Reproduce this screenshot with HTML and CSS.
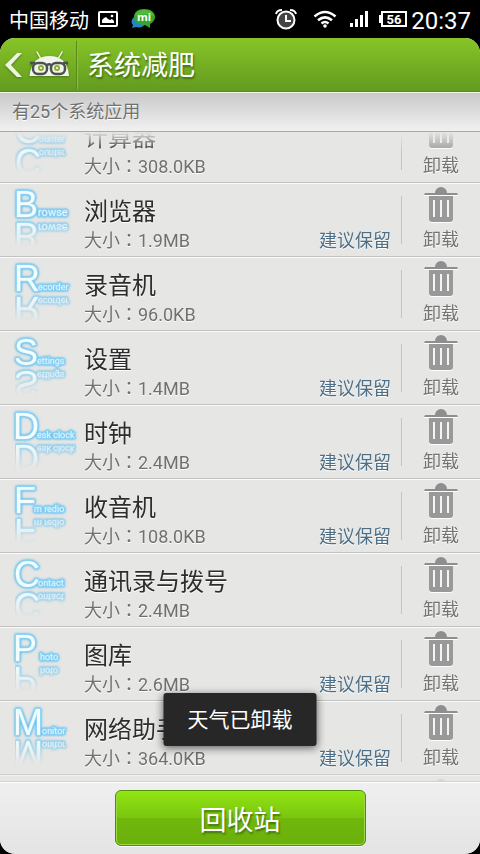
FILE: index.html
```html
<!DOCTYPE html>
<html lang="zh-CN">
<head>
<meta charset="utf-8">
<meta name="viewport" content="width=device-width, initial-scale=1">
<title>系统减肥</title>
<link rel="stylesheet" href="styles.css">
</head>
<body>
<svg class="defs" aria-hidden="true">
  <defs>
    <symbol id="trash" viewBox="0 0 36 37">
      <path fill="#fff" d="M1 8h34v1H1zM6 32h24v1a3 3 0 0 1-3 3H9a3 3 0 0 1-3-3z"/>
      <path fill="#8e8e8e" d="M12 6a6 6 0 0 1 12 0h10l1 2H1l1-2z"/>
      <path fill="#999" d="M6 9h24v23a3 3 0 0 1-3 3H9a3 3 0 0 1-3-3z"/>
      <path stroke="#f4f4f4" stroke-width="2" d="M11 13v17M18 13v17M25 13v17"/>
    </symbol>
  </defs>
</svg>

<div class="status">
  <span class="carrier">中国移动</span>
  <svg class="picture-icon" width="20" height="16" viewBox="0 0 20 16"><rect x="1" y="1" width="18" height="14" rx="1" fill="none" stroke="#fff" stroke-width="2"/><path fill="#fff" d="M4 12V9l2-2 2-1 2 2 2 1 2-1 2 2v2z"/><circle cx="14" cy="5" r="1.300" fill="#fff"/></svg>
  <svg class="chat-icon" width="26" height="22" viewBox="0 0 26 22"><path fill="#2583cf" d="M8 8C2 8 0 14 3 17l-1 3 4-1c4 1 8 0 9-3z"/><path fill="#35a82b" d="M14 1c7 0 11 3.500 11 8 0 3-2 5.500-5 7l0 4-5-3C8 17 4 14 4 9s4-8 10-8z"/><path fill="#6bca4a" opacity=".5" d="M14 2c6 0 9 2 10 6-5-2-14-2-19 0 1-4 4-6 9-6z"/><text x="14" y="13" class="mi">mi</text></svg>
  <span class="spacer"></span>
  <svg class="alarm-icon" width="22" height="21" viewBox="0 0 22 21"><circle cx="11" cy="11" r="8.500" fill="#444" stroke="#fff" stroke-width="2"/><path fill="none" stroke="#fff" stroke-width="2" d="M1 5q1-4 6-4M21 5q-1-4-6-4M11 6v6h5"/></svg>
  <svg class="wifi-icon" width="24" height="18" viewBox="0 0 24 18"><g fill="none" stroke="#fff" stroke-width="2.600"><path d="M1.500 6.500q10.500-9 21 0M5 10.300q7-6 14 0M8.500 13.500q3.500-3 7 0"/></g><circle cx="12" cy="16" r="1.800" fill="#fff"/></svg>
  <svg class="signal-icon" width="18" height="16" viewBox="0 0 18 16"><path fill="#fff" d="M0 12h3v4H0zM5 8h3v8H5zM10 4h3v12h-3zM15 0h3v16h-3z"/></svg>
  <svg class="battery-icon" width="28" height="16" viewBox="0 0 28 16"><rect x="3" y="1" width="24" height="14" fill="none" stroke="#fff" stroke-width="2"/><path fill="#fff" d="M0 4h3v8H0z"/><text x="15" y="13" class="level">56</text></svg>
  <time class="clock">20:37</time>
</div>

<div class="app">
  <header class="header">
    <button class="back" type="button" aria-label="返回">
      <svg width="70" height="30" viewBox="0 0 70 30">
        <path fill="#edf5e0" d="M17 3h5L11 15l11 12h-5L5 15z"/>
        <path stroke="#f1f6e8" stroke-width="1.500" stroke-linecap="round" d="M37 2l4 7M62 2l-4 7"/>
        <path fill="#f1f4ea" d="M29.500 26C31 12 38 6 49.500 6S68 12 69 26z"/>
        <g class="glasses"><rect x="33" y="13" width="14" height="11" rx="5"/><rect x="51" y="13" width="14" height="11" rx="5"/><path d="M30 13h5M47 15q2-1.500 4 0M63 13h5"/></g>
        <circle cx="41" cy="18" r="3" fill="#8aae32"/><circle cx="57" cy="18" r="3" fill="#8aae32"/><circle cx="41" cy="18" r="1" fill="#fff"/><circle cx="57" cy="18" r="1" fill="#fff"/>
      </svg>
    </button>
    <h1 class="title">系统减肥</h1>
  </header>
  <p class="summary">有25个系统应用</p>

  <main class="viewport">
    <ul class="apps">
      <li class="row">
        <svg class="logo" width="62" height="30" viewBox="0 0 62 30"><text x="0" y="27" class="initial">C</text><text x="24" y="26" class="rest">ounter</text></svg>
        <div class="info"><h2 class="name">计算器</h2><p class="meta"><span>大小<span lang="zh-TW" class="colon">：</span>308.0KB</span></p></div>
        <button class="remove" type="button"><svg width="36" height="37"><use href="#trash"/></svg>卸载</button>
      </li>
      <li class="row">
        <svg class="logo" width="62" height="30" viewBox="0 0 62 30"><text x="-1" y="27" class="initial">B</text><text x="23" y="26" class="rest wide">rowse</text></svg>
        <div class="info"><h2 class="name">浏览器</h2><p class="meta"><span>大小<span lang="zh-TW" class="colon">：</span>1.9MB</span><span class="keep">建议保留</span></p></div>
        <button class="remove" type="button"><svg width="36" height="37"><use href="#trash"/></svg>卸载</button>
      </li>
      <li class="row">
        <svg class="logo" width="62" height="30" viewBox="0 0 62 30"><text x="-1" y="27" class="initial">R</text><text x="23" y="26" class="rest">ecorder</text></svg>
        <div class="info"><h2 class="name">录音机</h2><p class="meta"><span>大小<span lang="zh-TW" class="colon">：</span>96.0KB</span></p></div>
        <button class="remove" type="button"><svg width="36" height="37"><use href="#trash"/></svg>卸载</button>
      </li>
      <li class="row">
        <svg class="logo" width="62" height="30" viewBox="0 0 62 30"><text x="-1" y="27" class="initial">S</text><text x="22" y="26" class="rest">ettings</text></svg>
        <div class="info"><h2 class="name">设置</h2><p class="meta"><span>大小<span lang="zh-TW" class="colon">：</span>1.4MB</span><span class="keep">建议保留</span></p></div>
        <button class="remove" type="button"><svg width="36" height="37"><use href="#trash"/></svg>卸载</button>
      </li>
      <li class="row">
        <svg class="logo" width="62" height="30" viewBox="0 0 62 30"><text x="-2" y="27" class="initial">D</text><text x="22" y="26" class="rest">esk clock</text></svg>
        <div class="info"><h2 class="name">时钟</h2><p class="meta"><span>大小<span lang="zh-TW" class="colon">：</span>2.4MB</span><span class="keep">建议保留</span></p></div>
        <button class="remove" type="button"><svg width="36" height="37"><use href="#trash"/></svg>卸载</button>
      </li>
      <li class="row">
        <svg class="logo" width="62" height="30" viewBox="0 0 62 30"><text x="-1" y="27" class="initial">F</text><text x="19" y="26" class="rest">m redio</text></svg>
        <div class="info"><h2 class="name">收音机</h2><p class="meta"><span>大小<span lang="zh-TW" class="colon">：</span>108.0KB</span><span class="keep">建议保留</span></p></div>
        <button class="remove" type="button"><svg width="36" height="37"><use href="#trash"/></svg>卸载</button>
      </li>
      <li class="row">
        <svg class="logo" width="62" height="30" viewBox="0 0 62 30"><text x="-1" y="27" class="initial">C</text><text x="23" y="26" class="rest">ontact</text></svg>
        <div class="info"><h2 class="name">通讯录与拨号</h2><p class="meta"><span>大小<span lang="zh-TW" class="colon">：</span>2.4MB</span></p></div>
        <button class="remove" type="button"><svg width="36" height="37"><use href="#trash"/></svg>卸载</button>
      </li>
      <li class="row">
        <svg class="logo" width="62" height="30" viewBox="0 0 62 30"><text x="-2" y="27" class="initial">P</text><text x="25" y="26" class="rest">hoto</text></svg>
        <div class="info"><h2 class="name">图库</h2><p class="meta"><span>大小<span lang="zh-TW" class="colon">：</span>2.6MB</span><span class="keep">建议保留</span></p></div>
        <button class="remove" type="button"><svg width="36" height="37"><use href="#trash"/></svg>卸载</button>
      </li>
      <li class="row">
        <svg class="logo" width="62" height="30" viewBox="0 0 62 30"><text x="-2" y="27" class="initial">M</text><text x="27" y="26" class="rest">onitor</text></svg>
        <div class="info"><h2 class="name">网络助手</h2><p class="meta"><span>大小<span lang="zh-TW" class="colon">：</span>364.0KB</span><span class="keep">建议保留</span></p></div>
        <button class="remove" type="button"><svg width="36" height="37"><use href="#trash"/></svg>卸载</button>
      </li>
      <li class="row">
        <span class="logo"></span>
        <div class="info"></div>
        <button class="remove" type="button"><svg width="36" height="37"><use href="#trash"/></svg></button>
      </li>
    </ul>
  </main>

  <footer class="footer">
    <button class="recycle" type="button">回收站</button>
  </footer>
  <div class="toast" role="status">天气已卸载</div>
</div>
</body>
</html>
```
FILE: styles.css
```css
* {
  box-sizing: border-box;
}

body {
  margin: 0;
  height: 100vh;
  display: flex;
  flex-direction: column;
  background: #000;
  font-family: Roboto, "Noto Sans CJK SC", sans-serif;
  font-size: 18px;
  overflow: hidden;
}

h1, h2, p, ul {
  margin: 0;
  padding: 0;
  font-weight: 400;
}

button {
  border: 0;
  padding: 0;
  background: none;
  font: inherit;
  color: inherit;
}

.defs {
  position: absolute;
  width: 0;
  height: 0;
}

/* Status bar */
.status {
  flex: none;
  height: 38px;
  display: flex;
  align-items: center;
  padding: 0 9px;
  color: #fff;
}

.carrier {
  font-size: 20px;
}

.picture-icon {
  margin-left: 9px;
}

.chat-icon {
  margin-left: 12px;
}

.mi {
  fill: #fff;
  font: 700 11px "Open Sans", sans-serif;
  text-anchor: middle;
}

.spacer {
  flex: 1;
}

.wifi-icon {
  margin-left: 16px;
}

.signal-icon {
  margin-left: 13px;
}

.battery-icon {
  margin: 0 4px 0 11px;
}

.level {
  fill: #fff;
  font: 700 13px Roboto, sans-serif;
  text-anchor: middle;
}

.clock {
  font-size: 24px;
  line-height: 38px;
  padding-top: 4px;
}

/* App frame */
.app {
  position: relative;
  flex: 1;
  min-height: 0;
  display: flex;
  flex-direction: column;
  overflow: hidden;
  border-radius: 15px;
  background: #e6e6e4;
}

.header {
  flex: none;
  height: 54px;
  display: flex;
  align-items: center;
  background: linear-gradient(#87c527, #639a20);
  border-bottom: 1px solid #5a8d1c;
  color: #fff;
}

.back {
  height: 48px;
  width: 77px;
  display: flex;
  align-items: center;
  border-right: 1px solid #578a1b;
  box-shadow: 1px 0 #8cbc4a;
}

.back svg {
  filter: drop-shadow(0 1px 1px #4a7a14);
}

.glasses {
  fill: none;
  stroke: #4b5150;
  stroke-width: 2.5;
}

.title {
  margin-left: 10px;
  padding-top: 2px;
  font-size: 27px;
  line-height: 48px;
  text-shadow: 1px 2px 2px #41700f;
}

.summary {
  flex: none;
  height: 40px;
  padding-left: 12px;
  line-height: 38px;
  color: #707070;
  text-shadow: 0 1px #fff;
  background: linear-gradient(#c9c9c9, #f1f1f1);
  border-top: 1px solid #f0f5e8;
  border-bottom: 1px solid #aaa;
}

/* App list, scrolled part of a row down */
.viewport {
  flex: 1;
  min-height: 0;
  overflow: hidden;
  -webkit-mask-image: linear-gradient(transparent, #000 20px, #000 calc(100% - 12px), transparent);
  mask-image: linear-gradient(transparent, #000 20px, #000 calc(100% - 12px), transparent);
}

.apps {
  margin-top: -23px;
  list-style: none;
}

.row {
  height: 74px;
  display: grid;
  grid-template-columns: 62px minmax(0, 1fr) 79px;
  column-gap: 7px;
  padding-left: 15px;
  border-top: 1px solid #fafafa;
  border-bottom: 1px solid #c2c2c2;
}

.logo {
  margin-top: 6px;
  filter: drop-shadow(0 0 1px #55b6e6) drop-shadow(0 0 1px #86cdf0);
  -webkit-box-reflect: below 0 linear-gradient(transparent 10%, rgba(0, 0, 0, .9));
}

.initial,
.rest {
  stroke: #8fd3f5;
  stroke-width: 2;
  stroke-linejoin: round;
  paint-order: stroke;
}

.initial {
  fill: #f2fdff;
  font: 400 36px "Liberation Sans", sans-serif;
}

.rest {
  fill: #e2f6ff;
  font: 400 9px Roboto, sans-serif;
}

.wide {
  font-size: 11px;
}

.info {
  padding-top: 11px;
}

.name {
  font-size: 24px;
  line-height: 34px;
  color: #2d2d2d;
  text-shadow: 0 1px #fff;
}

.meta {
  display: flex;
  justify-content: space-between;
  padding-right: 3px;
  line-height: 24px;
  color: #707070;
  text-shadow: 0 1px #fff;
}

.colon {
  font-family: "Noto Sans CJK TC", sans-serif;
  line-height: 1;
}

.keep {
  color: #4d7088;
}

.remove {
  display: flex;
  flex-direction: column;
  align-items: center;
  padding: 3px 0 0 1px;
  line-height: 32px;
  color: #747474;
  text-shadow: 0 1px #fff;
  background: linear-gradient(#c4c4c4, #c4c4c4) 0 12px / 1px 48px no-repeat;
}

/* Bottom bar */
.footer {
  flex: none;
  display: flex;
  justify-content: center;
  padding: 7px 0 8px;
  background: linear-gradient(#efefef, #e4e4e4);
  border-top: 1px solid #fff;
  box-shadow: 0 -1px #d2d2d2;
}

.recycle {
  height: 56px;
  padding: 0 84px;
  border: 1px solid #4f8d0d;
  border-radius: 6px;
  background: linear-gradient(#91e512, #7ac50f 50%, #70b70c 51%, #6bb00c);
  box-shadow: inset 0 0 0 1px #9bdc45, 0 1px #fff;
  color: #fff;
  font-size: 27px;
  text-shadow: 1px 2px 2px #41700f;
}

.toast {
  position: absolute;
  left: 50%;
  bottom: 108px;
  transform: translateX(-50%);
  padding: 1px 24px 0;
  border-radius: 3px;
  background: #272727;
  box-shadow: 0 2px 8px rgba(0, 0, 0, .6);
  color: #fff;
  font-size: 21px;
  line-height: 52px;
  white-space: nowrap;
}
```
